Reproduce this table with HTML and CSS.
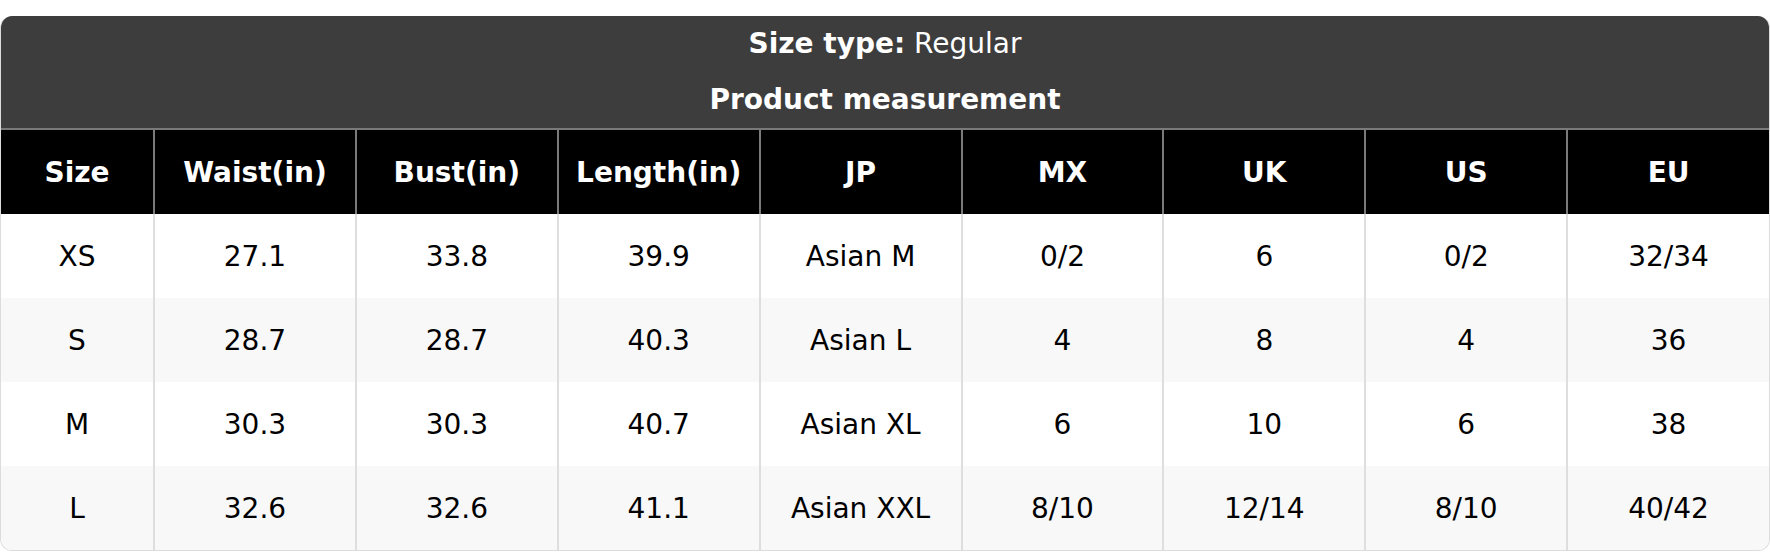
FILE: index.html
```html
<!DOCTYPE html>
<html lang="en">
<head>
<meta charset="utf-8">
<title>Size chart</title>
<link rel="stylesheet" href="styles.css">
</head>
<body>
<div class="card">
  <div class="caption">
    <div class="caption-line"><b>Size type:</b> Regular</div>
    <div class="caption-line"><b>Product measurement</b></div>
  </div>
  <table class="chart">
    <colgroup>
      <col class="col-first">
      <col><col><col><col><col><col><col><col>
    </colgroup>
    <thead>
      <tr>
        <th>Size</th><th>Waist(in)</th><th>Bust(in)</th><th>Length(in)</th><th>JP</th><th>MX</th><th>UK</th><th>US</th><th>EU</th>
      </tr>
    </thead>
    <tbody>
      <tr><td>XS</td><td>27.1</td><td>33.8</td><td>39.9</td><td>Asian M</td><td>0/2</td><td>6</td><td>0/2</td><td>32/34</td></tr>
      <tr><td>S</td><td>28.7</td><td>28.7</td><td>40.3</td><td>Asian L</td><td>4</td><td>8</td><td>4</td><td>36</td></tr>
      <tr><td>M</td><td>30.3</td><td>30.3</td><td>40.7</td><td>Asian XL</td><td>6</td><td>10</td><td>6</td><td>38</td></tr>
      <tr><td>L</td><td>32.6</td><td>32.6</td><td>41.1</td><td>Asian XXL</td><td>8/10</td><td>12/14</td><td>8/10</td><td>40/42</td></tr>
    </tbody>
  </table>
</div>
</body>
</html>
```
FILE: styles.css
```css
html, body {
  margin: 0;
  background: #ffffff;
}
body {
  padding-top: 16px;
  font-family: "DejaVu Sans", "Liberation Sans", sans-serif;
  font-size: 28px;
  color: #000;
}
.card {
  border: 1px solid #dcdcdc;
  border-top: none;
  border-radius: 12px;
  overflow: hidden;
}
.caption {
  background: #3d3d3d;
  color: #ffffff;
  text-align: center;
}
.caption-line {
  height: 56px;
  line-height: 56px;
}
.caption b { font-weight: bold; }
.chart {
  width: 100%;
  border-collapse: collapse;
  table-layout: fixed;
}
.col-first { width: 153px; }
.chart th {
  background: #000;
  color: #fff;
  font-weight: bold;
  height: 84px;
  padding: 0;
  text-align: center;
  border-top: 2px solid #7a7a7a;
  border-left: 2px solid #7a7a7a;
}
.chart th:first-child { border-left: none; }
.chart td {
  height: 84px;
  padding: 0;
  text-align: center;
  background: #ffffff;
  border-left: 2px solid #dedede;
}
.chart td:first-child { border-left: none; }
.chart tbody tr:nth-child(even) td { background: #f8f8f8; }
```
